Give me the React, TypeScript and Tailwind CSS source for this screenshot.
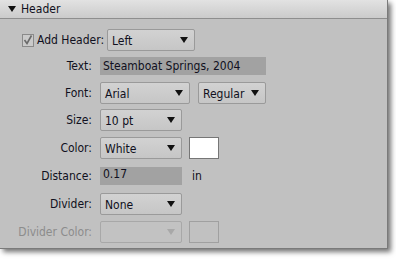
import React from "react";

function Arrow({ disabled }: { disabled?: boolean }) {
  return (
    <svg width="8" height="6" viewBox="0 0 8 6" className="shrink-0">
      <polygon points="0,0 8,0 4,6" fill={disabled ? "#a8a8a8" : "#111111"} />
    </svg>
  );
}

function Select({
  value,
  width,
  disabled,
}: {
  value?: string;
  width: string;
  disabled?: boolean;
}) {
  return (
    <div
      className={`${width} h-[22px] flex items-center justify-between pl-[4px] pr-[6px] rounded-[2px] border ${
        disabled
          ? "border-[#a8a8a8] bg-[#c2c2c2]"
          : "border-[#9a9a9a] bg-gradient-to-b from-[#d2d2d2] to-[#c6c6c6]"
      }`}
    >
      <span className="pt-[1px]">{value}</span>
      <Arrow disabled={disabled} />
    </div>
  );
}

function Label({ children, dim }: { children: React.ReactNode; dim?: boolean }) {
  return (
    <div className={`w-[92px] text-right shrink-0 ${dim ? "text-[#8c8c8c]" : ""}`}>
      {children}
    </div>
  );
}

export default function App() {
  return (
    <div className="w-[396px] h-[260px] bg-white">
      <div
        className="w-[388px] h-[249px] bg-[#c1c1c1] border-r border-b border-[#7a7a7a] shadow-[3px_3px_5px_rgba(0,0,0,0.55)] text-[12px] text-[#101020]"
        style={{ fontFamily: '"DejaVu Sans Condensed", "Liberation Sans", Arial, sans-serif' }}
      >
        <div className="h-[19px] flex items-center gap-[5px] pl-[8px] bg-gradient-to-b from-[#e2e2e2] to-[#cbcbcb] border-b border-[#8e8e8e]">
          <svg width="8" height="6" viewBox="0 0 8 6">
            <polygon points="0,0 8,0 4,6" fill="#111111" />
          </svg>
          <span className="text-[12px]">Header</span>
        </div>

        <div className="flex items-center mt-[10px] h-[22px]">
          <div className="w-[107px] flex items-center shrink-0">
            <div className="ml-[22px] w-[12px] h-[13px] border border-[#8a8a8a] bg-[#cacaca] flex items-center justify-center">
              <svg width="10" height="10" viewBox="0 0 10 10">
                <path d="M1.5 5 L4 8.5 L8.5 0.5" stroke="#6a6a6a" strokeWidth="1.6" fill="none" />
              </svg>
            </div>
            <span className="ml-[3px] whitespace-nowrap">Add Header:</span>
          </div>
          <Select value="Left" width="w-[88px]" />
        </div>

        <div className="flex items-center gap-[8px] mt-[6px]">
          <Label>Text:</Label>
          <div className="w-[166px] h-[18px] bg-[#a2a2a2] pl-[3px] flex items-center">
            Steamboat Springs, 2004
          </div>
        </div>

        <div className="flex items-center gap-[8px] mt-[7px]">
          <Label>Font:</Label>
          <Select value="Arial" width="w-[90px]" />
          <Select value="Regular" width="w-[68px]" />
        </div>

        <div className="flex items-center gap-[8px] mt-[5px]">
          <Label>Size:</Label>
          <Select value="10 pt" width="w-[82px]" />
        </div>

        <div className="flex items-center gap-[8px] mt-[6px]">
          <Label>Color:</Label>
          <Select value="White" width="w-[82px]" />
          <div className="ml-[-1px] w-[30px] h-[22px] bg-white border border-[#767676]" />
        </div>

        <div className="flex items-center gap-[8px] mt-[8px]">
          <Label>Distance:</Label>
          <div className="w-[82px] h-[18px] bg-[#a2a2a2] pl-[3px] leading-[14px]">0.17</div>
          <span className="ml-[2px]">in</span>
        </div>

        <div className="flex items-center gap-[8px] mt-[8px]">
          <Label>Divider:</Label>
          <Select value="None" width="w-[82px]" />
        </div>

        <div className="flex items-center gap-[8px] mt-[6px]">
          <Label dim>Divider Color:</Label>
          <Select width="w-[82px]" disabled />
          <div className="ml-[-1px] w-[30px] h-[22px] border border-[#a0a0a0]" />
        </div>
      </div>
    </div>
  );
}
